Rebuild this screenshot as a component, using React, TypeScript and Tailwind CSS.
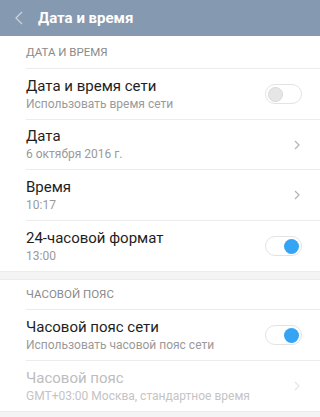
import React from 'react';

function Toggle({ on }: { on: boolean }) {
  return (
    <div className="w-[37px] h-[20px] rounded-full border border-[#e3e3e3] bg-white flex items-center px-[2px] shrink-0">
      {on ? (
        <div className="ml-auto w-[15px] h-[15px] rounded-full bg-[#35a4f4]" />
      ) : (
        <div className="w-[15px] h-[15px] rounded-full bg-[#e6e6e6] border border-[#d8d8d8]" />
      )}
    </div>
  );
}

function Chevron({ faded }: { faded?: boolean }) {
  return (
    <svg width="6" height="10" viewBox="0 0 6 10" className="shrink-0 mr-[2px]">
      <path d="M1 1l4 4-4 4" fill="none" stroke={faded ? '#e4e4e4' : '#b3b3b3'} strokeWidth="1.2" />
    </svg>
  );
}

type RowProps = {
  title: string;
  sub: string;
  right: React.ReactNode;
  last?: boolean;
  disabled?: boolean;
};

function Row({ title, sub, right, last, disabled }: RowProps) {
  return (
    <div className={`h-[50.5px] flex items-center pr-[18px] pt-[1px] ${last ? '' : 'border-b border-[#ececec]'}`}>
      <div className="flex-1 flex flex-col">
        <span className={`text-[15px] leading-[18px] ${disabled ? 'text-[#bdbdbd]' : 'text-[#1e1e1e]'}`}>{title}</span>
        <span className={`text-[12px] leading-[16px] mt-[1px] ${disabled ? 'text-[#c4c4c4]' : 'text-[#9a9a9a]'}`}>{sub}</span>
      </div>
      {right}
    </div>
  );
}

export default function App() {
  return (
    <div className="w-[320px] h-[417px] overflow-hidden bg-white" style={{ fontFamily: 'Roboto, "Noto Sans", sans-serif' }}>
      <div className="h-[36px] bg-[#8599b0] flex items-center">
        <svg width="8" height="14" viewBox="0 0 8 14" className="ml-[15px] mr-[15px]">
          <path d="M7 1L1 7l6 6" fill="none" stroke="#c9d3de" strokeWidth="1.3" />
        </svg>
        <span className="text-white text-[15px] font-bold">Дата и время</span>
      </div>

      <div className="pl-[26px]">
        <div className="h-[33px] flex items-center border-b border-[#ececec] text-[11.5px] text-[#8a8a8a] pt-[2px]">
          ДАТА И ВРЕМЯ
        </div>
        <Row title="Дата и время сети" sub="Использовать время сети" right={<Toggle on={false} />} />
        <Row title="Дата" sub="6 октября 2016 г." right={<Chevron />} />
        <Row title="Время" sub="10:17" right={<Chevron />} />
        <Row title="24-часовой формат" sub="13:00" right={<Toggle on />} last />
      </div>

      <div className="h-[9px] bg-[#f4f4f4] border-y border-[#ececec]" />

      <div className="pl-[26px]">
        <div className="h-[30px] flex items-center border-b border-[#ececec] text-[11.5px] text-[#8a8a8a]">
          ЧАСОВОЙ ПОЯС
        </div>
        <Row title="Часовой пояс сети" sub="Использовать часовой пояс сети" right={<Toggle on />} />
        <Row title="Часовой пояс" sub="GMT+03:00 Москва, стандартное время" right={<Chevron faded />} last disabled />
      </div>

      <div className="h-[9px] bg-[#f4f4f4] border-t border-[#ececec]" />
    </div>
  );
}
